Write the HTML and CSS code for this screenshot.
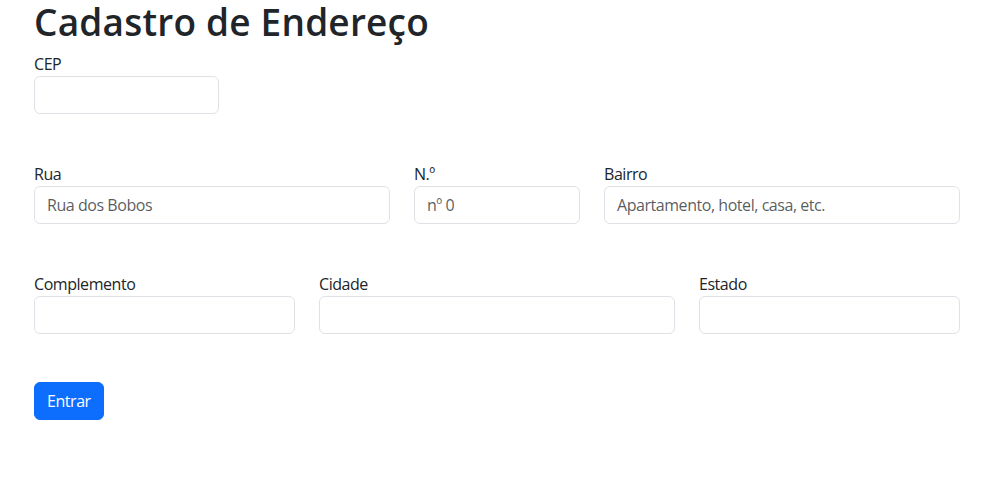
FILE: index.html
```html
<!DOCTYPE html>
<html lang="pt-BR">
<head>
<meta charset="utf-8">
<title>Cadastro de Endereço</title>
<link rel="stylesheet" href="styles.css">
</head>
<body>
<div class="container">
  <h1 class="title">Cadastro de Endereço</h1>
  <form class="form">
    <div class="row">
      <div class="col col-cep">
        <label for="cep">CEP</label>
        <input id="cep" class="input" type="text">
      </div>
    </div>
    <div class="row">
      <div class="col col-40">
        <label for="rua">Rua</label>
        <input id="rua" class="input" type="text" placeholder="Rua dos Bobos">
      </div>
      <div class="col col-20">
        <label for="num">N.º</label>
        <input id="num" class="input" type="text" placeholder="nº 0">
      </div>
      <div class="col col-40">
        <label for="bairro">Bairro</label>
        <input id="bairro" class="input" type="text" placeholder="Apartamento, hotel, casa, etc.">
      </div>
    </div>
    <div class="row">
      <div class="col col-30">
        <label for="comp">Complemento</label>
        <input id="comp" class="input" type="text">
      </div>
      <div class="col col-40">
        <label for="cidade">Cidade</label>
        <input id="cidade" class="input" type="text">
      </div>
      <div class="col col-30">
        <label for="estado">Estado</label>
        <input id="estado" class="input" type="text">
      </div>
    </div>
    <button type="button" class="btn">Entrar</button>
  </form>
</div>
</body>
</html>
```
FILE: styles.css
```css
* { box-sizing: border-box; }
html, body { margin: 0; padding: 0; }
body {
  font-family: "Open Sans", "Noto Sans", sans-serif;
  font-size: 16px;
  line-height: 1.5;
  letter-spacing: -0.45px;
  color: #212529;
  background: #fff;
}
.container {
  width: 972px;
  padding: 0 12px 0 34px;
}
.title {
  margin: 0 0 8px;
  font-size: 37px;
  font-weight: 600;
  line-height: 1.2;
  letter-spacing: 0.2px;
}
.form { margin: 0; }
.row {
  display: flex;
  margin: 0 -12px 48px;
}
.col {
  padding: 0 12px;
  display: flex;
  flex-direction: column;
}
.col-cep { width: 209px; }
.col-40 { width: 40%; }
.col-20 { width: 20%; }
.col-30 { width: 30%; }
label {
  display: block;
  height: 24px;
}
.input {
  display: block;
  width: 100%;
  height: 38px;
  padding: 6px 12px;
  font: inherit;
  letter-spacing: inherit;
  color: #212529;
  background: #fff;
  border: 1px solid #dee2e6;
  border-radius: 6px;
  outline: none;
}
.input::placeholder { color: rgba(33, 37, 41, 0.75); opacity: 1; }
.btn {
  display: inline-block;
  height: 38px;
  padding: 6px 12px;
  font: inherit;
  letter-spacing: inherit;
  color: #fff;
  background: #0d6efd;
  border: 1px solid #0d6efd;
  border-radius: 6px;
  cursor: pointer;
}
```
